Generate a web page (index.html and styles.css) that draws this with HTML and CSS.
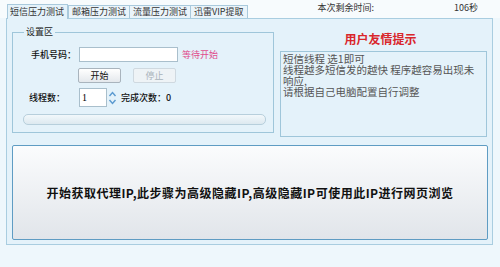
FILE: index.html
```html
<!DOCTYPE html>
<html lang="zh-CN">
<head>
    <meta charset="UTF-8">
    <title>压力测试</title>
    <link rel="stylesheet" href="styles.css">
</head>
<body>
    <div class="topbar">
        <div class="tabs">
            <span class="tab active">短信压力测试</span>
            <span class="tab">邮箱压力测试</span>
            <span class="tab">流量压力测试</span>
            <span class="tab">迅雷VIP提取</span>
        </div>
        <span class="left-label">本次剩余时间:</span>
        <span class="left-value">106秒</span>
    </div>

    <div class="panel">
        <div class="toprow">
            <fieldset class="settings">
                <legend>设置区</legend>
                <div class="row">
                    <span class="label">手机号码：</span>
                    <input type="text" class="phone">
                    <span class="status">等待开始</span>
                </div>
                <div class="row buttons">
                    <button class="btn">开始</button>
                    <button class="btn" disabled>停止</button>
                </div>
                <div class="row threads">
                    <span class="label">线程数：</span>
                    <span class="spin">
                        <input type="text" class="spin-input" value="1">
                        <span class="arrows">
                            <svg width="9" height="18" viewBox="0 0 9 18">
                                <path d="M1.5 7 L4.5 3.5 L7.5 7" fill="none" stroke="#5b9ad0" stroke-width="1.4"/>
                                <path d="M1.5 11 L4.5 14.5 L7.5 11" fill="none" stroke="#5b9ad0" stroke-width="1.4"/>
                            </svg>
                        </span>
                    </span>
                    <span class="done">完成次数：0</span>
                </div>
                <div class="progress"></div>
            </fieldset>

            <div class="tips">
                <div class="tips-title">用户友情提示</div>
                <div class="tips-box">短信线程 选1即可<br>线程越多短信发的越快 程序越容易出现未响应,<br>请根据自己电脑配置自行调整</div>
            </div>
        </div>

        <button class="bigbtn">开始获取代理IP,此步骤为高级隐藏IP,高级隐藏IP可使用此IP进行网页浏览</button>
    </div>
</body>
</html>
```

FILE: styles.css
```css
* {
    box-sizing: border-box;
}

body {
    margin: 0;
    width: 500px;
    height: 267px;
    background: #eef7fc;
    font-family: "Noto Sans CJK SC", "DejaVu Sans", sans-serif;
    font-size: 9px;
    color: #222;
    overflow: hidden;
}

.topbar {
    display: flex;
    align-items: flex-end;
    height: 18px;
    padding-left: 7px;
    background: #f7fbfd;
}

.tabs {
    display: flex;
    align-items: flex-end;
}

.tab {
    height: 13px;
    line-height: 12px;
    padding: 0 3px;
    border: 1px solid #a9c9dc;
    border-bottom: none;
    background: #eaf4fa;
    font-size: 9px;
    color: #333;
    margin-right: -1px;
}

.tab.active {
    height: 15px;
    line-height: 14px;
    background: #e4f2fa;
    position: relative;
    top: 1px;
    padding: 0 3px 0 2px;
    margin-right: 0;
}

.left-label {
    margin-left: 71px;
    margin-bottom: 4px;
    font-size: 9px;
    color: #333;
}

.left-value {
    margin-left: auto;
    margin-right: 22px;
    margin-bottom: 4px;
    font-size: 9px;
    color: #333;
}

.panel {
    margin: 0 7px 0 6px;
    height: 227px;
    border: 1px solid #a9cde0;
    background: #e4f2fa;
    padding: 7px 5px 0 5px;
}

.toprow {
    display: flex;
    gap: 6px;
}

.settings {
    margin: 0;
    width: 265px;
    height: 107px;
    border: 1px solid #9fc6da;
    padding: 9px 8px 0 9px;
}

.settings legend {
    padding: 0 2px;
    font-size: 9px;
    line-height: 12px;
    margin-left: 2px;
}

.row {
    display: flex;
    align-items: center;
}

.label {
    width: 57px;
    padding-left: 9px;
    font-size: 9px;
    font-weight: 500;
    color: #111;
    white-space: nowrap;
}

.phone {
    width: 99px;
    height: 15px;
    border: 1px solid #a9bfcc;
    background: #fff;
    margin: 0;
}

.status {
    margin-left: 4px;
    color: #e04d8c;
    font-size: 9px;
}

.buttons {
    margin-top: 6px;
    padding-left: 56px;
    gap: 12px;
}

.btn {
    width: 43px;
    height: 15px;
    padding: 0;
    font-family: inherit;
    font-size: 9px;
    line-height: 13px;
    color: #111;
    border: 1px solid #a9b4bd;
    border-radius: 2px;
    background: linear-gradient(#ffffff, #e4e8ec);
}

.btn:disabled {
    color: #a8b2ba;
    border-color: #cfd9e0;
    background: #eef3f6;
}

.threads {
    margin-top: 5px;
}

.threads .label {
    padding-left: 7px;
}

.spin {
    display: flex;
    align-items: center;
}

.spin-input {
    width: 28px;
    height: 19px;
    margin: 0;
    border: 1px solid #a9bfcc;
    background: #fff;
    font-family: "Liberation Serif", serif;
    font-size: 10px;
    padding: 0 2px;
}

.arrows {
    display: flex;
    margin-left: 1px;
}

.done {
    margin-left: 4px;
    font-size: 9px;
    font-weight: 500;
    color: #111;
}

.progress {
    margin-top: 7px;
    height: 11px;
    border: 1px solid #b7cfdc;
    border-radius: 5px;
    background: linear-gradient(#f2f8fb, #dde9f0);
    margin-left: 1px;
    margin-right: -1px;
}

.tips {
    flex: 1;
    display: flex;
    flex-direction: column;
}

.tips-title {
    text-align: center;
    color: #d9262b;
    font-weight: bold;
    font-size: 12px;
    line-height: 14px;
    margin-top: 6px;
    padding-right: 6px;
}

.tips-box {
    margin-top: 5px;
    width: 207px;
    height: 86px;
    border: 1px solid #9fc6da;
    background: #e4f2fa;
    padding: 1px 2px;
    font-size: 10.5px;
    line-height: 11px;
    color: #555;
}

.bigbtn {
    display: block;
    margin-top: 8px;
    width: 476px;
    height: 95px;
    padding: 0;
    border: 1px solid #5f9cc3;
    border-radius: 2px;
    background: linear-gradient(#fbfcfd, #e1e5ea);
    font-family: "Noto Sans CJK SC", sans-serif;
    font-weight: bold;
    font-size: 12px;
    letter-spacing: 0.5px;
    color: #111;
}
```
